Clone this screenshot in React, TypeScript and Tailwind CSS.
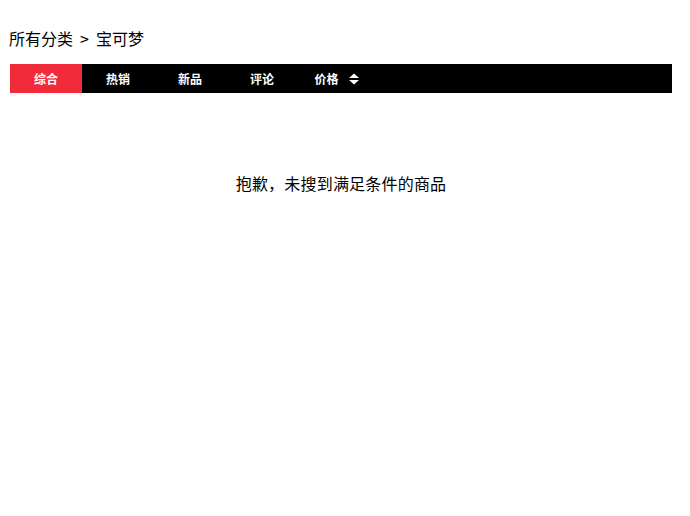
const tabs = ["综合", "热销", "新品", "评论"];

function SortIcon() {
  return (
    <svg width="10" height="12" viewBox="0 0 10 12" className="ml-[10px] shrink-0">
      <path d="M0 5 L5 0.5 L10 5 Z" fill="#fff" />
      <path d="M0 7 L5 11.5 L10 7 Z" fill="#fff" />
    </svg>
  );
}

export default function App() {
  return (
    <div
      className="min-h-[516px] w-[690px] bg-white text-black"
      style={{ fontFamily: '"Noto Sans CJK SC", "Noto Sans", sans-serif' }}
    >
      <div className="w-[662px] ml-[10px]">
        <div className="pt-[26px] -ml-[1px] flex text-[16px] leading-[24px]">
          <span>所有分类</span>
          <span className="mx-[7px]">&gt;</span>
          <span>宝可梦</span>
        </div>
        <div className="mt-[14px] flex h-[29px] bg-black">
          {tabs.map((t, i) => (
            <div
              key={t}
              className={`flex w-[72px] items-center justify-center text-[12px] font-bold text-white ${
                i === 0 ? "bg-[#f22b3b]" : ""
              }`}
            >
              {t}
            </div>
          ))}
          <div className="flex w-[72px] items-center justify-center pl-[5px] text-[12px] font-bold text-white">
            价格
            <SortIcon />
          </div>
        </div>
        <div className="mt-[78px] text-center text-[16px] leading-[24px] tracking-[0.2px]">
          抱歉，未搜到满足条件的商品
        </div>
      </div>
    </div>
  );
}
